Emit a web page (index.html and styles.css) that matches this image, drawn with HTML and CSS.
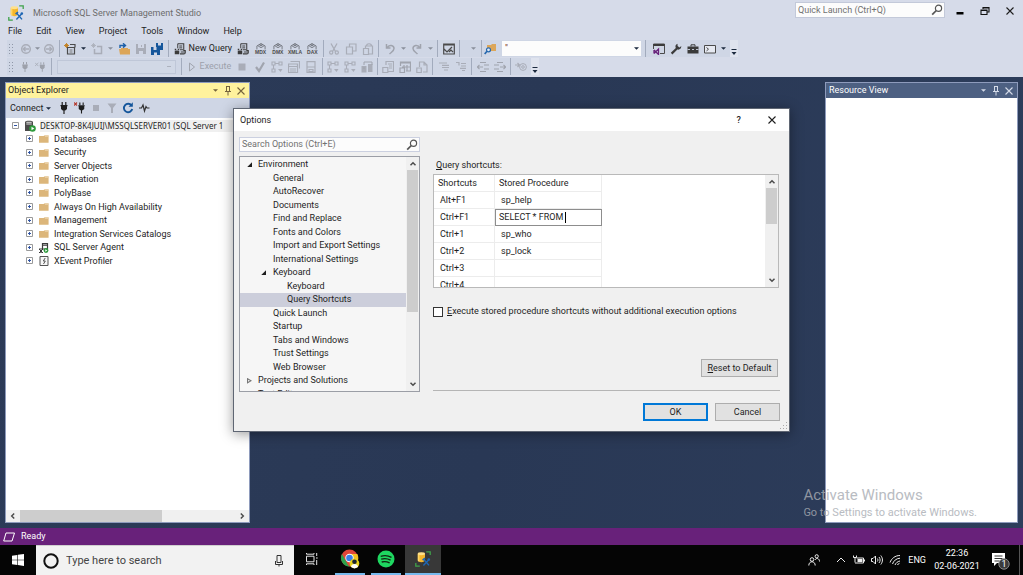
FILE: index.html
```html
<!DOCTYPE html>
<html lang="en">
<head>
<meta charset="utf-8">
<title>Microsoft SQL Server Management Studio</title>
<link rel="stylesheet" href="styles.css">
</head>
<body>
<svg class="sprite" aria-hidden="true">
  <symbol id="caret" viewBox="0 0 6 6"><path d="M0 1.5h6L3 4.5z" fill="currentColor"/></symbol>
  <symbol id="overflow" viewBox="0 0 8 8"><path d="M1.5 1h5v1h-5zM1.5 4h5L4 7z" fill="#1b293e"/></symbol>
  <symbol id="ssms" viewBox="0 0 20 20"><path d="M14 1h5v4M1 15v4h5" fill="none" stroke="#3fa24a" stroke-width="1.600"/><path d="M3.500 3.500v8.500c0 1 2 2 4.500 2s4.500-1 4.500-2V3.500z" fill="#f5b62c"/><path d="M3.500 3.500v8.500c0 .6.800 1.200 2 1.600V3z" fill="#ffd667"/><ellipse cx="8" cy="3.500" rx="4.500" ry="1.800" fill="#ffe08a"/><path d="M11 10.500l6.500 7.500M17.500 10.500L10.500 18" stroke="#1f66b4" stroke-width="1.800"/><path d="M9.500 11.500l3-2.500" stroke="#1f66b4" stroke-width="2"/><circle cx="17.300" cy="10.700" r="1.600" fill="#1f66b4"/></symbol>
  <symbol id="search" viewBox="0 0 12 12"><circle cx="7.500" cy="4.300" r="3.100" fill="none" stroke="currentColor" stroke-width="1.200"/><path d="M5.300 6.500L1.200 10.700" stroke="currentColor" stroke-width="1.700"/></symbol>
  <symbol id="doc-query" viewBox="0 0 16 16"><path d="M5 1h8v9h2v3c0 1-1 1.500-2 1.500H8" fill="none" stroke="#3b3b3b" stroke-width="1.400"/><path d="M5 1v6M7 4h4M7 6.500h4M8 9h4M9 12h6" stroke="#3b3b3b" stroke-width="1.300"/><path d="M1 10h6v5H1z" fill="#3b3b3b"/><path d="M1 8.500h2M5 8.500h2" stroke="#3b3b3b" stroke-width="1.400"/></symbol>
  <symbol id="cube" viewBox="0 0 16 12"><path d="M1 11V5l7-4 7 4v6M3 5l5 3 5-3M8 1v3M5 3l3 2 3-2" fill="none" stroke="#5d6067" stroke-width="1.300"/></symbol>
  <symbol id="arrow-circle" viewBox="0 0 12 12"><circle cx="6" cy="6" r="4.300" fill="none" stroke="#a9adb8" stroke-width="1.500"/><path d="M9 6H3.500M5.500 3.800L3.300 6l2.200 2.200" fill="none" stroke="#a9adb8" stroke-width="1.400"/></symbol>
  <symbol id="undo" viewBox="0 0 12 12"><path d="M2.500 1v4h4M3 5c2-4 7-3 7 .5C10 8 7.500 9 5.500 11" fill="none" stroke="#9fa3ad" stroke-width="1.500"/></symbol>
  <symbol id="plug" viewBox="0 0 12 12"><path d="M4.200 0v3M7.800 0v3" stroke="currentColor" stroke-width="1.200"/><path d="M2.500 3h7v1.200H9V7L7.300 8.500H4.700L3 7V4.200h-.5zM5.400 8h1.200v4H5.400z" fill="currentColor"/></symbol>
  <symbol id="folder" viewBox="0 0 12 10"><path d="M0 1.500h5.500L7 .5h4.500v9H0z" fill="#dcb67a"/><path d="M7.200 1.500h3.600" stroke="#f5e6cb" stroke-width="1"/></symbol>
  <symbol id="plus" viewBox="0 0 8 8"><path d="M.5.5h6v6h-6z" fill="#fff" stroke="#9a9a9a"/><path d="M2 3.500h3M3.500 2v3" stroke="#3155a5"/></symbol>
  <symbol id="minus" viewBox="0 0 8 8"><path d="M.5.5h6v6h-6z" fill="#fff" stroke="#9a9a9a"/><path d="M2 3.500h3" stroke="#3155a5"/></symbol>
  <symbol id="pin" viewBox="0 0 8 10"><path d="M2 .5h4M2.500.5v5M5.500.5v5M1 5.500h6M4 6v3.500" stroke="currentColor" fill="none"/></symbol>
  <symbol id="close" viewBox="0 0 10 10"><path d="M1.500 1.500l7 7M8.500 1.500l-7 7" stroke="currentColor" stroke-width="1.100" fill="none"/></symbol>
  <symbol id="chev" viewBox="0 0 8 8"><path d="M1.500 5.200L4 2.700l2.500 2.500" fill="none" stroke="#4d4d4d" stroke-width="1.500"/></symbol>
  <symbol id="flow" viewBox="0 0 12 12"><path d="M1 1h3v3H1zM8 1h3v3H8zM1 8h3v3H1zM4 2.500h4M2.500 4v4" fill="none" stroke="#a9adb8" stroke-width="1.100"/><path d="M7 8h4.500L9.500 11z" fill="#a9adb8"/></symbol>
  <symbol id="grid" viewBox="0 0 12 12"><path d="M2.500.5h9v7M.5 3h9v8.500h-9zM.5 5.500h9M2 8h6M2 10h6" fill="none" stroke="#a9adb8" stroke-width="1.200"/></symbol>
  <symbol id="page" viewBox="0 0 12 12"><path d="M4 4V.5h7.500v10H6M.8 6.500h5v5h-5zM6 3h4M7 5h3M7 7h3" fill="none" stroke="#a9adb8" stroke-width="1.200"/></symbol>
  <symbol id="lines" viewBox="0 0 12 12"><path d="M1 2h8M4 4.300h7M4 6.500h7M6 9h4" stroke="#a9adb8" stroke-width="1.200"/></symbol>
  <symbol id="indent" viewBox="0 0 12 12"><path d="M3 1.500h6M7 4h5M7 8h5M3 10.500h6M0 6h6M2.500 3.800L.3 6l2.200 2.200" fill="none" stroke="#a0a4ae" stroke-width="1.200"/></symbol>
</svg>

<header class="chrome">
  <div class="titlebar">
    <svg class="app-icon"><use href="#ssms"/></svg>
    <h1 class="app-title">Microsoft SQL Server Management Studio</h1>
    <div class="quick">
      <input class="quick-input" type="text" placeholder="Quick Launch (Ctrl+Q)" aria-label="Quick Launch">
      <svg class="i12"><use href="#search"/></svg>
    </div>
    <div class="winbtns">
      <button aria-label="Minimize"><svg viewBox="0 0 10 10" class="i10"><path d="M1.500 6h7v2.500h-7z"/></svg></button>
      <button aria-label="Restore"><svg viewBox="0 0 10 10" class="i10"><path d="M3 3V1.500h6v4.500H7.500M1 4h6v4.500H1zM1 4.500h6M3 2h6" fill="none" stroke="#111" stroke-width="1.100"/></svg></button>
      <button aria-label="Close"><svg class="i10"><use href="#close"/></svg></button>
    </div>
  </div>
  <nav class="menu">
    <a href="#">File</a><a href="#">Edit</a><a href="#">View</a><a href="#">Project</a><a href="#">Tools</a><a href="#">Window</a><a href="#">Help</a>
  </nav>

  <div class="toolbar">
    <span class="grip"></span>
    <div class="grp w44">
      <button aria-label="Back"><svg class="i12"><use href="#arrow-circle"/></svg></button>
      <svg class="caret dim"><use href="#caret"/></svg>
      <button aria-label="Forward"><svg class="i12 flip"><use href="#arrow-circle"/></svg></button>
    </div>
    <div class="grp w108">
      <button aria-label="New project"><svg class="i12" viewBox="0 0 12 12"><path d="M6 1.500h5v3M3.500 4.500h7v6.500h-7zM10.500 4v5" fill="none" stroke="#4a4a4a" stroke-width="1.200"/><path d="M5.500 7h3M5.500 9h3" stroke="#777"/><path d="M2.500 0v5M0 2.500h5M1 1l3 3M4 1L1 4" stroke="#c27d1a" stroke-width=".9"/></svg></button>
      <svg class="caret"><use href="#caret"/></svg>
      <button aria-label="Add item"><svg class="i12" viewBox="0 0 12 12"><path d="M6 3.500h4.500v7h-7V6" fill="none" stroke="#a9adb8" stroke-width="1.500"/><path d="M2.500 0v5M0 2.500h5M1 1l3 3M4 1L1 4" stroke="#a9adb8" stroke-width=".8"/></svg></button>
      <svg class="caret dim"><use href="#caret"/></svg>
      <button aria-label="Open"><svg class="i12" viewBox="0 0 12 12"><path d="M1 6h2V5h7v1h2v5.500H2z" fill="#dca659"/><path d="M2 5V2.500h5M5 .3l2.500 2.200L5 4.600" fill="none" stroke="#1c5fa8" stroke-width="1.400"/></svg></button>
      <button aria-label="Save"><svg class="i12" viewBox="0 0 12 12"><path d="M1 1h10v10H1z" fill="#a9adb8"/><path d="M3 1h6v4H3zM4 8h4v3H4z" fill="#d0d6e5"/><path d="M6.500 2v2" stroke="#a9adb8"/></svg></button>
      <button aria-label="Save all"><svg class="i12" viewBox="0 0 12 12"><path d="M5 0h7v7H9v5H0V4h5z" fill="#15569b"/><path d="M7 0h3v2.500H7zM2.500 4h3v3h-3zM3 9.500h3V12H3z" fill="#cfd6e5"/></svg></button>
    </div>
    <div class="grp w154">
      <button class="with-text"><svg class="i12"><use href="#doc-query"/></svg>New Query</button>
      <button aria-label="Engine query"><svg class="i12"><use href="#doc-query"/></svg></button>
      <button class="lang" aria-label="MDX query"><svg><use href="#cube"/></svg><span>MDX</span></button>
      <button class="lang" aria-label="DMX query"><svg><use href="#cube"/></svg><span>DMX</span></button>
      <button class="lang" aria-label="XMLA query"><svg><use href="#cube"/></svg><span>XMLA</span></button>
      <button class="lang" aria-label="DAX query"><svg><use href="#cube"/></svg><span>DAX</span></button>
    </div>
    <div class="grp w54">
      <button aria-label="Cut"><svg class="i12" viewBox="0 0 12 12"><path d="M3 .5l4.500 8M9 .5L4.500 8.500" stroke="#a9adb8" stroke-width="1.300"/><circle cx="3.200" cy="9.500" r="1.600" fill="none" stroke="#a9adb8" stroke-width="1.200"/><circle cx="8.800" cy="9.500" r="1.600" fill="none" stroke="#a9adb8" stroke-width="1.200"/></svg></button>
      <button aria-label="Copy"><svg class="i12" viewBox="0 0 12 12"><path d="M4.500 4V1h6.500v7H8M1.500 4h6v7h-6z" fill="none" stroke="#a9adb8" stroke-width="1.200"/></svg></button>
      <button aria-label="Paste"><svg class="i12" viewBox="0 0 12 12"><path d="M3.500 5V3h7v8H7M4.500 3c0-3 5-3 5 0M1.500 5.500h5v6h-5z" fill="none" stroke="#a9adb8" stroke-width="1.200"/></svg></button>
    </div>
    <div class="grp w58">
      <button aria-label="Undo"><svg class="i12"><use href="#undo"/></svg></button>
      <svg class="caret dim"><use href="#caret"/></svg>
      <button aria-label="Redo"><svg class="i12 flip"><use href="#undo"/></svg></button>
      <svg class="caret dim"><use href="#caret"/></svg>
    </div>
    <div class="grp w22">
      <button aria-label="Activity monitor"><svg class="i12" viewBox="0 0 12 12"><path d="M.7 1.200h10.600v9.800H.7zM.7 2h10.600M1 6l3 3 5-5M6 9l2-2 2 2" fill="none" stroke="#4a4a4a" stroke-width="1.200"/></svg></button>
    </div>
    <div class="grp w22 end"><svg class="caret dim"><use href="#caret"/></svg></div>
    <div class="grp w164">
      <button aria-label="Find in files"><svg class="i12" viewBox="0 0 12 12"><path d="M3 2h4l1-1h4v7H3z" fill="#dca659"/><circle cx="4.500" cy="6.800" r="2" fill="#dfe8f5" stroke="#2568ae" stroke-width="1.200"/><path d="M3 8.300L.7 11" stroke="#2568ae" stroke-width="1.700"/></svg></button>
      <div class="combo"><input type="text" value="&quot;" aria-label="Find"><button aria-label="Find history"><svg class="caret"><use href="#caret"/></svg></button></div>
    </div>
    <div class="grp w84">
      <button aria-label="Properties"><svg class="i12" viewBox="0 0 12 12"><path d="M.5 6V1h11v9.500H7" fill="none" stroke="#4a4a4a"/><path d="M.5 2h11" stroke="#3b3b3b" stroke-width="2"/><path d="M1 7l3.500 3.500M1 10.500L5.500 6v5.500L3 9M1 7v3.500" fill="none" stroke="#68217a" stroke-width="1.300"/></svg></button>
      <button aria-label="Settings"><svg class="i12" viewBox="0 0 12 12"><path d="M7.500.8C5.500 1.500 5 3.500 5.800 5L.8 9.800l1.600 1.700 5-5c2 .6 4-.9 3.900-3.500L9.500 4.500 7.600 3z" fill="#3b3b3b"/></svg></button>
      <button aria-label="Toolbox"><svg class="i12" viewBox="0 0 12 12"><path d="M4 3.500V1.800h4v1.700" fill="none" stroke="#3b3b3b"/><path d="M.5 3.500h11v7H.5z" fill="#3b3b3b"/><path d="M.5 6.500H3M5 6.500h2M9 6.500h2.500" stroke="#bcc2ce"/></svg></button>
      <button aria-label="Command window"><svg class="i12" viewBox="0 0 12 12"><path d="M.5 2.500h11v7.500H.5z" fill="#e6e9f1" stroke="#4a4a4a"/><path d="M2.500 4.500l2 1.700-2 1.700" fill="none" stroke="#4a4a4a"/></svg></button>
      <svg class="caret"><use href="#caret"/></svg>
    </div>
    <button class="more" aria-label="Toolbar options"><svg><use href="#overflow"/></svg></button>
  </div>

  <div class="toolbar">
    <span class="grip"></span>
    <div class="grp w36 dimmed">
      <button aria-label="Connect"><svg class="i10"><use href="#plug"/></svg></button>
      <button aria-label="Disconnect"><svg class="i12" viewBox="0 0 14 12"><path d="M0 1l4 4M4 1L0 5" stroke="#a9adb8"/><use href="#plug" x="3" width="11" height="12"/></svg></button>
    </div>
    <div class="grp w130"><select class="db" aria-label="Available databases" disabled><option></option></select></div>
    <div class="grp w140 dimmed">
      <button class="with-text exec"><svg class="i10" viewBox="0 0 10 10"><path d="M2.500 1l5 4-5 4z" fill="none" stroke="#a0a4ae"/></svg>Execute</button>
      <button aria-label="Stop"><svg class="i12" viewBox="0 0 12 12"><path d="M2.500 2.500h7v7h-7z" fill="#a9adb8"/></svg></button>
      <button aria-label="Parse"><svg class="i12" viewBox="0 0 12 12"><path d="M2 6l3 4L10 1.500" fill="none" stroke="#a0a4ae" stroke-width="2.200"/></svg></button>
      <button aria-label="Estimated plan"><svg class="i12"><use href="#flow"/></svg></button>
      <button aria-label="Query options"><svg class="i12"><use href="#grid"/></svg></button>
      <button aria-label="IntelliSense"><svg class="i12" viewBox="0 0 12 12"><path d="M2 .7h8v10.600H2zM2 6h8M4 8.500h4v2H4z" fill="none" stroke="#a9adb8" stroke-width="1.200"/></svg></button>
    </div>
    <div class="grp w54">
      <button aria-label="Actual plan"><svg class="i12"><use href="#flow"/></svg></button>
      <button aria-label="Live statistics"><svg class="i12"><use href="#flow"/></svg></button>
      <button aria-label="Client statistics"><svg class="i12" viewBox="0 0 12 12"><path d="M.5 5h5v6.500h-5zM7 3h4.500v8H7z" fill="#a9adb8"/><path d="M3 4V1h8v3M2 7h2" fill="none" stroke="#a0a4ae"/></svg></button>
    </div>
    <div class="grp w56">
      <button aria-label="Results to text"><svg class="i12"><use href="#page"/></svg></button>
      <button aria-label="Results to grid"><svg class="i12" viewBox="0 0 12 12"><path d="M1.500 5V1h10v9H7M1.500 2h10M5 4v3M8 4v6M3 6h8M1 7h4.500v4.500H1z" fill="none" stroke="#a0a4ae" stroke-width="1.200"/></svg></button>
      <button aria-label="Results to file"><svg class="i12" viewBox="0 0 12 12"><path d="M3.500 6V1H8l3 3v7H7M8 1v3h3M.8 7h4.500v4.500H.8z" fill="none" stroke="#a9adb8" stroke-width="1.200"/></svg></button>
    </div>
    <div class="grp w38">
      <button aria-label="Comment"><svg class="i12"><use href="#lines"/></svg></button>
      <button aria-label="Uncomment"><svg class="i12" viewBox="0 0 12 12"><path d="M1 1.500h3v3M6 2.500h5M6 5h5M5 7.300h6M7 9.500h3" fill="none" stroke="#a9adb8" stroke-width="1.200"/></svg></button>
    </div>
    <div class="grp w38">
      <button aria-label="Decrease indent"><svg class="i12"><use href="#indent"/></svg></button>
      <button aria-label="Increase indent"><svg class="i12 flip"><use href="#indent"/></svg></button>
    </div>
    <div class="grp w20">
      <button aria-label="Template values"><svg class="i12" viewBox="0 0 12 12"><path d="M0 4h4M2.500 2l2 2-2 2" fill="none" stroke="#a9adb8" stroke-width="1.200"/><circle cx="8" cy="6" r="3.400" fill="none" stroke="#a9adb8"/><circle cx="8" cy="6" r="1.300" fill="none" stroke="#a9adb8"/></svg></button>
    </div>
    <button class="more" aria-label="Toolbar options"><svg><use href="#overflow"/></svg></button>
  </div>
</header>

<main class="workspace">
  <section class="panel explorer">
    <div class="panel-head active">
      <h2>Object Explorer</h2>
      <button aria-label="Window position"><svg class="caret"><use href="#caret"/></svg></button>
      <button aria-label="Auto hide"><svg class="pin"><use href="#pin"/></svg></button>
      <button aria-label="Close"><svg class="i10"><use href="#close"/></svg></button>
    </div>
    <div class="panel-tools">
      <button class="connect">Connect<svg class="caret"><use href="#caret"/></svg></button>
      <button aria-label="Connect server"><svg class="i12"><use href="#plug"/></svg></button>
      <button aria-label="Disconnect server"><svg class="i12" viewBox="0 0 12 12"><path d="M0 .5l3 3M3 .5l-3 3" stroke="#b5382c" stroke-width="1.100"/><use href="#plug" x="2" width="11" height="12"/></svg></button>
      <button aria-label="Stop"><svg class="i12" viewBox="0 0 12 12"><path d="M3 3h6v6H3z" fill="#a9adb8"/></svg></button>
      <button aria-label="Filter"><svg class="i12" viewBox="0 0 12 12"><path d="M1.500 1.500h9L7 6v5H5V6z" fill="#a9adb8"/></svg></button>
      <button aria-label="Refresh"><svg class="i12" viewBox="0 0 12 12"><path d="M9.500 3.500A4.200 4.200 0 1 0 10.200 7" fill="none" stroke="#15569b" stroke-width="1.900"/><path d="M10.800.3v4.500H6.500z" fill="#15569b"/></svg></button>
      <button aria-label="Activity"><svg class="i12" viewBox="0 0 12 12"><path d="M1 6h2.500L5 3l1.500 6L8 4.500 9 6h2.500" fill="none" stroke="#333" stroke-width="1.200"/></svg></button>
    </div>
    <ul class="tree">
      <li class="root"><svg class="i8"><use href="#minus"/></svg><svg class="i12" viewBox="0 0 12 12"><path d="M1 2c0-1.800 8-1.800 8 0v9H1z" fill="#4a4a4a"/><path d="M2.300 2.300h5.400M2.300 4h5.400" stroke="#dcdcdc"/><circle cx="8.500" cy="8.500" r="3.300" fill="#2e9a3c"/><path d="M7.500 6.800l2.800 1.700-2.800 1.700z" fill="#fff"/></svg><span>DESKTOP-8K4JUIJ\MSSQLSERVER01 (SQL Server 1</span></li>
      <li><svg class="i8"><use href="#plus"/></svg><svg class="folder"><use href="#folder"/></svg><span>Databases</span></li>
      <li><svg class="i8"><use href="#plus"/></svg><svg class="folder"><use href="#folder"/></svg><span>Security</span></li>
      <li><svg class="i8"><use href="#plus"/></svg><svg class="folder"><use href="#folder"/></svg><span>Server Objects</span></li>
      <li><svg class="i8"><use href="#plus"/></svg><svg class="folder"><use href="#folder"/></svg><span>Replication</span></li>
      <li><svg class="i8"><use href="#plus"/></svg><svg class="folder"><use href="#folder"/></svg><span>PolyBase</span></li>
      <li><svg class="i8"><use href="#plus"/></svg><svg class="folder"><use href="#folder"/></svg><span>Always On High Availability</span></li>
      <li><svg class="i8"><use href="#plus"/></svg><svg class="folder"><use href="#folder"/></svg><span>Management</span></li>
      <li><svg class="i8"><use href="#plus"/></svg><svg class="folder"><use href="#folder"/></svg><span>Integration Services Catalogs</span></li>
      <li><svg class="i8"><use href="#plus"/></svg><svg class="folder" viewBox="0 0 10 10"><path d="M3.500.5h5V6h-5zM4 2.200h4" fill="none" stroke="#3b3b3b" stroke-width="1.200"/><path d="M0 6l4 4M0 10l4-4M0 6h4M0 9.800h4" stroke="#3b3b3b"/><circle cx="7" cy="7.500" r="2.400" fill="#2e9a3c"/><path d="M6.300 6.300l2 1.200-2 1.200z" fill="#fff"/></svg><span>SQL Server Agent</span></li>
      <li><svg class="i8"><use href="#plus"/></svg><svg class="folder" viewBox="0 0 10 10"><path d="M1 .5h8v9H1z" fill="#f6f6f6" stroke="#555"/><path d="M6.200 2L4.300 5h2L4.500 8" fill="none" stroke="#555"/></svg><span>XEvent Profiler</span></li>
    </ul>
    <div class="hscroll"><svg class="i8 to-left"><use href="#chev"/></svg><div class="track"><div class="thumb"></div></div><svg class="i8 to-right"><use href="#chev"/></svg></div>
  </section>

  <section class="panel resource">
    <div class="panel-head">
      <h2>Resource View</h2>
      <button aria-label="Window position"><svg class="caret"><use href="#caret"/></svg></button>
      <button aria-label="Auto hide"><svg class="pin"><use href="#pin"/></svg></button>
      <button aria-label="Close"><svg class="i10"><use href="#close"/></svg></button>
    </div>
  </section>
  <div class="watermark"><p class="wm-title">Activate Windows</p><p class="wm-text">Go to Settings to activate Windows.</p></div>
</main>

<footer class="status"><svg viewBox="0 0 12 10"><path d="M3 1h8.500L9 9H.7z" fill="none" stroke="#fff"/></svg>Ready</footer>

<div class="taskbar">
  <button class="start" aria-label="Start"><svg class="i12" viewBox="0 0 12 12"><path d="M0 1.700l5.300-.8v4.800H0zM5.900.8L12 0v5.700H5.900zM0 6.300h5.300v4.800L0 10.300zM5.900 6.300H12V12l-6.100-.9z" fill="#fff"/></svg></button>
  <div class="search"><svg class="ring" viewBox="0 0 16 16"><circle cx="8" cy="8" r="6.700" fill="none" stroke="#111" stroke-width="2"/></svg><input type="text" placeholder="Type here to search" aria-label="Type here to search"><svg class="mic" viewBox="0 0 10 14"><path d="M3 1.500h4v7H3zM1.500 7v3.500h7V7M5 10.500v2" fill="none" stroke="#333"/></svg></div>
  <button class="tile" aria-label="Task view"><svg class="i12" viewBox="0 0 12 12"><path d="M.5 3.200h7.500v5.600H.5zM.5 0v1.200h7.500V0M.5 12v-1.200h7.500V12M10.700 0v3M10.700 7v5M10 5h1.700" fill="none" stroke="#e6e6e6"/></svg></button>
  <button class="tile open" aria-label="Chrome"><svg class="i20" viewBox="0 0 20 20"><circle cx="9.500" cy="9" r="8.500" fill="#e0463a"/><path d="M2 5L8 16l2 1.500A8.500 8.500 0 0 1 2 5z" fill="#2ba24c"/><path d="M9.500 5h7.800A8.500 8.500 0 0 1 10 17.500z" fill="#f4c020"/><circle cx="9.500" cy="9" r="4.200" fill="#fff"/><circle cx="9.500" cy="9" r="3.300" fill="#3a7ee8"/><circle cx="14.500" cy="14.500" r="4.800" fill="#e8d21d"/><circle cx="14.500" cy="12.800" r="2.300" fill="#1d2733"/><path d="M11 18c0-4 7-4 7 0l-3.500 1.500z" fill="#fff"/></svg></button>
  <button class="tile open" aria-label="Spotify"><svg class="i20" viewBox="0 0 20 20"><circle cx="10" cy="10" r="8.500" fill="#1ed760"/><path d="M4.700 7.300c4-1.200 7.500-.8 10.800 1M5.200 10.200c3.500-1 6.500-.6 9.400 1M5.700 13c3-.8 5.300-.4 7.900.9" fill="none" stroke="#10240f" stroke-width="1.400"/></svg></button>
  <button class="tile open current" aria-label="SQL Server Management Studio"><svg class="app-icon"><use href="#ssms"/></svg></button>
  <div class="tray">
    <svg class="i12 people" viewBox="0 0 12 12"><circle cx="4" cy="5.500" r="1.800"/><path d="M.8 11.500c0-5 6.400-5 6.400 0"/><circle cx="8.700" cy="2.300" r="1.600"/><path d="M7 6c1-2.500 4.500-1.800 4.500 1.500"/></svg>
    <svg class="i12" viewBox="0 0 12 12"><path d="M2 8l4-4 4 4"/></svg>
    <svg class="i12" viewBox="0 0 12 12"><path d="M.5 1.500v2h3v-2M2 4v4.500M3.500 4h7v5H2"/><path d="M4.500 6.500h5" stroke-width="3"/><path d="M11.500 5.500v2"/></svg>
    <svg class="i12" viewBox="0 0 12 12"><path d="M.5 4.500H2L4.500 2v8L2 7.500H.5zM6.300 4.500c.8 1 .8 2 0 3M8 3c1.500 2 1.500 4 0 6M9.800 1.500c2.200 3 2.200 6 0 9"/></svg>
    <svg class="i12" viewBox="0 0 12 12"><path d="M1 8.500C2.500 4.500 6 1.500 11 1.500M3.500 10c1-3 3.500-5.500 7.500-5.800M6 11c.8-2 2.500-3.500 5-4"/><path d="M8.500 11c.3-.8 1-1.500 2-1.700"/></svg>
    <span class="lang-code">ENG</span>
    <div class="clock"><time>22:36</time><span>02-06-2021</span></div>
    <svg class="note" viewBox="0 0 20 20"><path d="M2 3h13v10H7l-3 3v-3H2z" fill="#fff" stroke="none"/><path d="M4.500 6h8M4.500 8.500h8M4.500 11h5" stroke="#333"/><circle cx="14" cy="14" r="5.200" fill="#3b3b3b" stroke="#888"/><text x="14" y="17" text-anchor="middle">1</text></svg>
  </div>
</div>

<div class="dialog" role="dialog" aria-labelledby="dlg-title">
  <div class="dlg-head"><h2 id="dlg-title">Options</h2><button class="help" aria-label="Help">?</button><button aria-label="Close"><svg class="i10"><use href="#close"/></svg></button></div>
  <div class="dlg-body">
    <div class="left-pane">
      <div class="opt-search"><input type="text" placeholder="Search Options (Ctrl+E)" aria-label="Search options"><svg class="i12"><use href="#search"/></svg></div>
      <div class="opt-box">
        <ul class="opts">
          <li class="l1"><i class="tri open"></i>Environment</li>
          <li class="l2">General</li><li class="l2">AutoRecover</li><li class="l2">Documents</li><li class="l2">Find and Replace</li><li class="l2">Fonts and Colors</li><li class="l2">Import and Export Settings</li><li class="l2">International Settings</li>
          <li class="l2"><i class="tri open"></i>Keyboard</li>
          <li class="l3">Keyboard</li><li class="l3 sel">Query Shortcuts</li>
          <li class="l2">Quick Launch</li><li class="l2">Startup</li><li class="l2">Tabs and Windows</li><li class="l2">Trust Settings</li><li class="l2">Web Browser</li>
          <li class="l1"><i class="tri"></i>Projects and Solutions</li>
          <li class="l1"><i class="tri"></i>Text Editor</li>
        </ul>
        <div class="vscroll"><svg class="i8"><use href="#chev"/></svg><div class="track"><div class="thumb tall"></div></div><svg class="i8 to-down"><use href="#chev"/></svg></div>
      </div>
    </div>
    <div class="right-pane">
      <p class="caption"><u>Q</u>uery shortcuts:</p>
      <div class="table-box">
        <div class="table-view">
          <table>
            <thead><tr><th>Shortcuts</th><th>Stored Procedure</th></tr></thead>
            <tbody>
              <tr><td>Alt+F1</td><td>sp_help</td></tr>
              <tr><td>Ctrl+F1</td><td class="edit"><div class="cell"><span>SELECT * FROM</span><i class="cursor"></i></div></td></tr>
              <tr><td>Ctrl+1</td><td>sp_who</td></tr>
              <tr><td>Ctrl+2</td><td>sp_lock</td></tr>
              <tr><td>Ctrl+3</td><td></td></tr>
              <tr><td>Ctrl+4</td><td></td></tr>
            </tbody>
          </table>
        </div>
        <div class="vscroll"><svg class="i8"><use href="#chev"/></svg><div class="track"><div class="thumb short"></div></div><svg class="i8 to-down"><use href="#chev"/></svg></div>
      </div>
      <label class="check"><input type="checkbox"><span><u>E</u>xecute stored procedure shortcuts without additional execution options</span></label>
      <button class="btn reset"><span><u>R</u>eset to Default</span></button>
      <hr>
      <div class="actions"><button class="btn ok">OK</button><button class="btn">Cancel</button></div>
    </div>
  </div>
  <svg class="resize" viewBox="0 0 8 8"><path d="M6 0h1v1H6zM6 3h1v1H6zM3 3h1v1H3zM6 6h1v1H6zM3 6h1v1H3zM0 6h1v1H0z" fill="#aaa"/></svg>
</div>
</body>
</html>
```
FILE: styles.css
```css
* { box-sizing: border-box; }
body {
  margin: 0; height: 100vh; display: flex; flex-direction: column; overflow: hidden;
  background: #2b3a56; color: #1e1e1e;
  font: 9px/13px Roboto, "Open Sans", sans-serif;
}
h1, h2, p, ul { margin: 0; padding: 0; font-size: inherit; font-weight: 400; list-style: none; }
button, input, select { font: inherit; color: inherit; margin: 0; padding: 0; border: 0; background: none; border-radius: 0; }
input { outline: 0; min-width: 0; }
svg { display: block; flex: none; }
button { display: flex; align-items: center; justify-content: center; flex: none; }
.sprite { display: none; }
.i8 { width: 8px; height: 8px; }
.i10 { width: 10px; height: 10px; }
.i12 { width: 12px; height: 12px; }
.i20 { width: 20px; height: 20px; }
.flip { transform: scaleX(-1); }
.to-left { transform: rotate(-90deg); }
.to-right { transform: rotate(90deg); }
.to-down { transform: rotate(180deg); }
.caret { width: 5px; height: 5px; color: #1b293e; }
.caret.dim { color: #8a8f9b; }

/* Title, menu and toolbars */
.chrome { background: #d6dbe9; flex: none; padding-bottom: 1px; }
.titlebar { height: 22px; display: flex; align-items: center; padding: 4px 1px 0 8px; }
.app-icon { width: 16px; height: 16px; }
.app-title { flex: 1; padding-left: 9px; color: #6d6d6d; }
.quick { width: 150px; height: 16px; margin: 0 2px 6px 0; display: flex; align-items: center; background: #fcfcfc; border: 1px solid #c3c9d9; padding: 0 1px 0 2px; color: #555; }
.quick-input { flex: 1; }
::placeholder { color: #717171; opacity: 1; }
.winbtns { display: flex; padding-bottom: 5px; }
.winbtns button { width: 25px; height: 16px; }
.menu { height: 18px; display: flex; align-items: center; gap: 14px; padding-left: 8px; }
.menu a { color: #1e1e1e; text-decoration: none; }
.toolbar { height: 17px; margin: 0 0 1px 7px; display: flex; width: max-content; background: #cfd6e5; }
.grip { width: 5px; margin: 3px 3px 3px 1px; background: radial-gradient(circle, #8f97a8 0 1px, transparent 1px) 0 0 / 3px 3px; }
.grp { display: flex; align-items: center; justify-content: space-around; padding: 0 2px; border-right: 1px solid #a2abbd; }
.w20 { width: 20px; } .w22 { width: 22px; } .w36 { width: 36px; } .w38 { width: 39px; } .w44 { width: 44px; }
.w54 { width: 55px; } .w56 { width: 55px; } .w58 { width: 59px; } .w84 { width: 84px; } .w108 { width: 109px; }
.w130 { width: 130px; } .w140 { width: 141px; } .w154 { width: 155px; } .w164 { width: 164px; }
.w20, .w84 { border-right: 0; }
.w84 { padding-left: 4px; }
.grp.end { justify-content: flex-end; padding-right: 5px; }
.with-text { gap: 3px; }
.dimmed { color: #9da1ab; }
.lang { flex-direction: column; }
.lang svg { width: 12px; height: 7px; }
.lang span { font: 700 5px/5px "Liberation Sans", sans-serif; color: #4a4a4a; width: 12px; display: flex; justify-content: center; }
.combo { flex: 1; height: 15px; margin: 0 2px 0 6px; display: flex; background: #fcfcfc; color: #7a2020; }
.combo input { flex: 1; padding-left: 3px; }
.combo button { width: 9px; }
.db { flex: 1; height: 14px; margin: 0 3px; appearance: none; border: 1px solid #b9c1d3; background: #d3d9e7 linear-gradient(#a0a4ae, #a0a4ae) right 4px center / 4px 1px no-repeat; }
.more { width: 8px; background: #dfe3ee; align-items: flex-end; padding-bottom: 1px; }
.more svg { width: 8px; height: 8px; }

/* Workspace panels */
.workspace { flex: 1; min-height: 0; display: flex; justify-content: space-between; padding: 5px; position: relative; background: linear-gradient(100deg, #2c3b58, #293855 50%, #2d3d5b); }
.panel { display: flex; flex-direction: column; background: #fff; border: 1px solid #8e9bbc; overflow: hidden; }
.explorer { width: 245px; }
.resource { width: 193px; }
.panel-head { height: 15px; display: flex; align-items: center; gap: 3px; background: #4d6082; color: #fff; padding: 0 3px; flex: none; }
.panel-head.active { background: #fff29d; color: #1e1e1e; padding-left: 2px; }
.panel-head.active svg { color: #75633d; }
.panel-head svg { color: #d5dbe8; }
.panel-head h2 { flex: 1; }
.panel-head button { width: 10px; }
.pin { width: 8px; height: 10px; }
.panel-tools { height: 20px; display: flex; align-items: center; gap: 4px; padding-left: 4px; background: #cfd6e5; flex: none; }
.connect { gap: 3px; margin-right: 3px; }
.tree { height: 150px; flex: none; display: grid; grid-auto-rows: 1fr; padding: 1px 0 0 20px; }
.tree li { display: flex; align-items: center; white-space: nowrap; }
.tree .folder { width: 10px; height: 10px; margin: 0 5px; }
.tree .root { margin-left: -14px; gap: 4px; }
.tree .root span { flex: 1; background: #f0f0f0; font: 8px/12px "Noto Sans", sans-serif; }
.hscroll { height: 12px; margin-top: auto; display: flex; align-items: center; background: #f0f0f0; padding: 0 3px; }
.track { flex: 1; }
.hscroll .track { align-self: stretch; margin: 0 3px; }
.hscroll .thumb { height: 100%; width: 66%; }
.watermark { position: absolute; right: 46px; bottom: 8px; color: #a8acb3; opacity: .8; }
.wm-title { font-size: 15px; line-height: 19px; }
.wm-text { font-size: 11px; line-height: 15px; }

.status { height: 17px; flex: none; display: flex; align-items: center; gap: 6px; padding-left: 3px; background: #68217a; color: #fff; }
.status svg { width: 12px; height: 10px; }

/* Taskbar */
.taskbar { height: 30px; flex: none; display: flex; background: #050505; color: #fff; }
.start { width: 36px; }
.search { width: 258px; display: flex; align-items: center; background: #f2f2f2; border-top: 1px solid #cfcfcf; padding: 0 10px 0 7px; color: #333; }
.search input { flex: 1; font-size: 11px; padding-left: 7px; }
.search ::placeholder { color: #444; }
.ring { width: 16px; height: 16px; }
.mic { width: 10px; height: 14px; }
.tile { width: 36px; border-bottom: 2px solid transparent; }
.tile.open { border-bottom-color: #76b9ed; width: 30px; margin-left: 6px; }
.tile + .tile.open { margin-left: 5px; }
.tile.open + .tile.open { margin-left: 6px; }
.tile.open + .tile.current { width: 36px; margin-left: 4px; background: #383838; }
.tray { margin-left: auto; display: flex; align-items: center; gap: 6px; margin-right: 3px; padding-right: 9px; border-right: 1px solid #555; }
.tray svg { fill: none; stroke: #eee; }
.tray .people { margin-right: 9px; }
.lang-code { margin-left: 1px; }
.clock { display: flex; flex-direction: column; align-items: center; width: 50px; }
.tray .note { width: 20px; height: 20px; margin-left: 2px; }
.note text { font-size: 9px; fill: #fff; stroke: none; }

/* Options dialog */
.dialog { position: absolute; left: 233px; top: 108px; width: 557px; display: flex; flex-direction: column; background: #f0f0f0; border: 1px solid #5f6673; box-shadow: 0 2px 12px rgba(0, 0, 0, .4); }
.dlg-head { height: 22px; display: flex; align-items: center; background: #fff; padding: 0 12px 0 6px; }
.dlg-head h2 { flex: 1; }
.dlg-head .help { margin-right: 26px; font-weight: 500; }
.dlg-body { display: flex; gap: 13px; padding: 6px 9px 10px 5px; }
.left-pane { width: 181px; flex: none; display: flex; flex-direction: column; gap: 4px; }
.opt-search { height: 15px; display: flex; align-items: center; background: #fcfcfc; border: 1px solid #cbd0e0; padding: 0 1px 0 2px; color: #555; }
.opt-search input { flex: 1; }
.opt-box { height: 236px; display: flex; background: #f6f6f6; border: 1px solid #9b9ea6; overflow: hidden; }
.opts { flex: 1; height: 244px; display: grid; grid-auto-rows: 1fr; padding-top: 1px; }
.opts li { display: flex; align-items: center; }
.l1 { padding-left: 7px; }
.l2 { padding-left: 33px; }
.l3 { padding-left: 47px; }
.sel { background: #cccedb; }
.tri { width: 5px; height: 6px; margin-right: 6px; background: #777; clip-path: polygon(0 0, 100% 50%, 0 100%, 0 0, 1px 2px, 1px 4px, 3px 3px, 1px 2px); }
.tri.open { height: 5px; background: #1e1e1e; clip-path: polygon(100% 0, 100% 100%, 0 100%); }
.l2 .tri { margin-left: -12px; margin-right: 7px; }
.vscroll { width: 13px; display: flex; flex-direction: column; align-items: center; padding: 3px 0; background: #f0f0f0; }
.vscroll .track { width: 11px; margin: 2px 0; }
.thumb { background: #cdcdcd; }
.thumb.tall { height: 142px; }
.thumb.short { height: 36px; }
.right-pane { flex: 1; min-width: 0; display: flex; flex-direction: column; padding-top: 22px; }
.caption { padding-left: 3px; }
.table-box { height: 114px; margin: 2px 1px 0 0; display: flex; background: #fff; border: 1px solid #b9b9b9; overflow: hidden; }
.table-view { flex: 1; overflow: hidden; }
table { border-collapse: separate; border-spacing: 0; table-layout: fixed; width: 168px; }
th, td { height: 17px; padding: 0 0 0 6px; font-weight: 400; text-align: left; line-height: 12px; border-right: 1px solid #ececec; border-bottom: 1px solid #ececec; }
th { padding-left: 4px; }
th:first-child { width: 61px; }
td.edit { padding: 0; outline: 1px solid #8d8d8d; outline-offset: -1px; }
.cell { display: flex; align-items: center; gap: 2px; padding-left: 4px; }
.cursor { width: 1px; height: 11px; background: #000; }
.check { display: flex; align-items: center; gap: 4px; margin-top: 17px; }
.check input { appearance: none; width: 10px; height: 10px; border: 1px solid #333; background: #fff; }
.btn { height: 18px; width: 65px; background: #e1e1e1; border: 1px solid #adadad; }
.btn.reset { width: 77px; align-self: flex-end; margin: 41px 2px 0 0; }
.btn.ok { border: 2px solid #0078d7; }
hr { width: 100%; margin: 13px 0 12px; border: 0; border-top: 1px solid #b5b5b5; }
.actions { display: flex; justify-content: flex-end; gap: 7px; }
.resize { position: absolute; right: 1px; bottom: 1px; width: 8px; height: 8px; }
```
